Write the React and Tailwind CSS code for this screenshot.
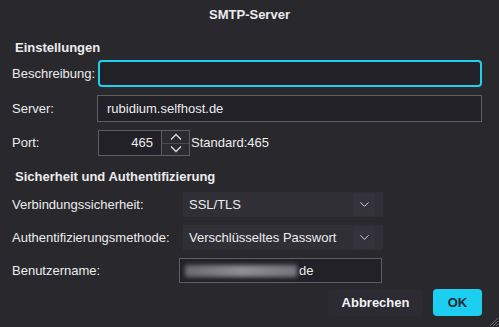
import { ChevronDown } from 'lucide-react';

const font = { fontFamily: '"Liberation Sans", Arial, sans-serif' };

function Select({ value }) {
  return (
    <div className="flex h-[25px] w-[200px] items-center justify-between bg-[#302f36] pl-[6px] pr-[8px] text-[13px] text-[#ececee]">
      <span>{value}</span>
      <span className="flex h-[22px] w-[22px] items-center justify-center bg-[#34333b]">
        <ChevronDown className="h-[15px] w-[15px] text-[#dcdce0]" strokeWidth={1.5} />
      </span>
    </div>
  );
}

function Caret({ up }) {
  return (
    <svg width="14" height="8" viewBox="0 0 14 8" fill="none">
      <path d={up ? 'M2 6.5 L7 1.5 L12 6.5' : 'M2 1.5 L7 6.5 L12 1.5'} stroke="#dcdce0" strokeWidth="1.3" />
    </svg>
  );
}

export default function App() {
  return (
    <div className="relative h-[327px] w-[499px] overflow-hidden bg-[#29282d] text-[#ececee]" style={font}>
      <div className="flex h-[30px] items-center justify-center text-[13px] font-bold">SMTP-Server</div>

      <div className="pl-3 pr-[17px]">
        {/* Einstellungen */}
        <div className="mt-[5px] flex h-[25px] items-center pl-[3px] text-[13px] font-bold">Einstellungen</div>

        <div className="flex h-[27px] items-center">
          <span className="w-[86px] text-[13px]">Beschreibung:</span>
          <div className="h-full flex-1 rounded-[4px] border-2 border-[#1fcfee] bg-[#222127]" />
        </div>

        <div className="mt-[8px] flex h-[27px] items-center">
          <span className="w-[85px] text-[13px]">Server:</span>
          <div className="flex h-full flex-1 items-center border border-[#5e5d63] bg-[#222127] pl-[9px] text-[13px]">
            rubidium.selfhost.de
          </div>
        </div>

        <div className="mt-[8px] flex h-[26px] items-center">
          <span className="w-[86px] text-[13px]">Port:</span>
          <div className="flex h-full w-[92px] border border-[#5e5d63] bg-[#222127]">
            <div className="flex flex-1 items-center justify-end pr-[8px] text-[13px]">465</div>
            <div className="flex w-[28px] flex-col border-l border-[#5e5d63] bg-[#2c2b31]">
              <div className="flex flex-1 items-center justify-center border-b border-[#4a494f]">
                <Caret up />
              </div>
              <div className="flex flex-1 items-center justify-center">
                <Caret />
              </div>
            </div>
          </div>
          <span className="ml-[1px] text-[13px]">Standard:465</span>
        </div>

        {/* Sicherheit und Authentifizierung */}
        <div className="mt-[8px] flex h-[25px] items-center pl-[3px] text-[13px] font-bold">
          Sicherheit und Authentifizierung
        </div>

        <div className="mt-[3px] flex h-[25px] items-center">
          <span className="w-[171px] text-[13px]">Verbindungssicherheit:</span>
          <Select value="SSL/TLS" />
        </div>

        <div className="mt-[8px] flex h-[25px] items-center">
          <span className="w-[171px] text-[13px]">Authentifizierungsmethode:</span>
          <Select value="Verschlüsseltes Passwort" />
        </div>

        <div className="mt-[8px] flex h-[25px] items-center">
          <span className="w-[167px] text-[13px]">Benutzername:</span>
          <div className="flex h-full w-[203px] items-center overflow-hidden border border-[#5e5d63] bg-[#222127] pl-[5px] text-[13px]">
            {/* redacted part of the user name */}
            <div className="h-[12px] w-[112px] bg-gradient-to-r from-[#6a6970] via-[#8f8e95] to-[#77767d] blur-[2px]" />
            <span className="ml-[2px]">de</span>
          </div>
        </div>

        <div className="mt-[6px] flex h-[27px] justify-end gap-[10px]">
          <button className="h-full w-[95px] rounded-[3px] bg-[#2c2b31] text-[13px] font-bold text-[#f2f2f4]">
            Abbrechen
          </button>
          <button className="h-full w-[49px] rounded-[4px] bg-[#1ccff0] text-[13px] font-bold text-[#1b2a33]">
            OK
          </button>
        </div>
      </div>

      <svg className="absolute bottom-0 right-0" width="12" height="12" viewBox="0 0 12 12">
        <path d="M11 3 L3 11 M11 6 L6 11 M11 9 L9 11" stroke="#6a696f" strokeWidth="1" />
      </svg>
    </div>
  );
}
